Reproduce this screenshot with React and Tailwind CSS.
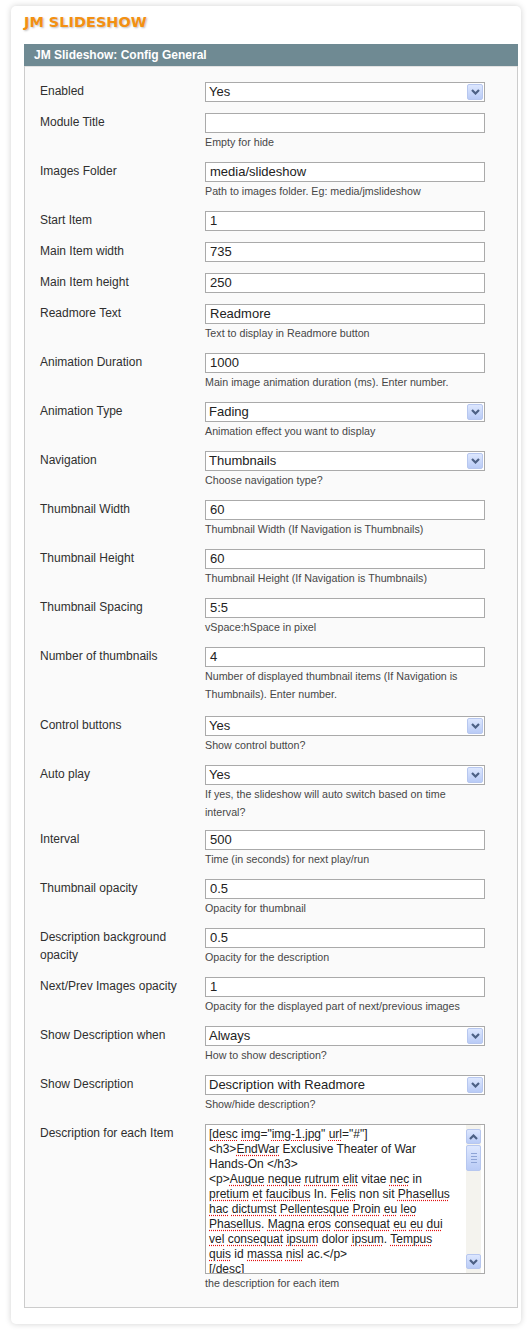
import React from 'react';

const rows = [
  { label: 'Enabled', type: 'select', value: 'Yes' },
  { label: 'Module Title', value: '', note: 'Empty for hide' },
  { label: 'Images Folder', value: 'media/slideshow', note: 'Path to images folder. Eg: media/jmslideshow' },
  { label: 'Start Item', value: '1' },
  { label: 'Main Item width', value: '735' },
  { label: 'Main Item height', value: '250' },
  { label: 'Readmore Text', value: 'Readmore', note: 'Text to display in Readmore button' },
  { label: 'Animation Duration', value: '1000', note: 'Main image animation duration (ms). Enter number.' },
  { label: 'Animation Type', type: 'select', value: 'Fading', note: 'Animation effect you want to display' },
  { label: 'Navigation', type: 'select', value: 'Thumbnails', note: 'Choose navigation type?' },
  { label: 'Thumbnail Width', value: '60', note: 'Thumbnail Width (If Navigation is Thumbnails)' },
  { label: 'Thumbnail Height', value: '60', note: 'Thumbnail Height (If Navigation is Thumbnails)' },
  { label: 'Thumbnail Spacing', value: '5:5', note: 'vSpace:hSpace in pixel' },
  { label: 'Number of thumbnails', value: '4', note: 'Number of displayed thumbnail items (If Navigation is Thumbnails). Enter number.', pb: 'pb-[13px]' },
  { label: 'Control buttons', type: 'select', value: 'Yes', note: 'Show control button?' },
  { label: 'Auto play', type: 'select', value: 'Yes', note: 'If yes, the slideshow will auto switch based on time interval?', pb: 'pb-[9px]' },
  { label: 'Interval', value: '500', note: 'Time (in seconds) for next play/run' },
  { label: 'Thumbnail opacity', value: '0.5', note: 'Opacity for thumbnail' },
  { label: 'Description background opacity', value: '0.5', note: 'Opacity for the description' },
  { label: 'Next/Prev Images opacity', value: '1', note: 'Opacity for the displayed part of next/previous images' },
  { label: 'Show Description when', type: 'select', value: 'Always', note: 'How to show description?' },
  { label: 'Show Description', type: 'select', value: 'Description with Readmore', note: 'Show/hide description?' },
  { label: 'Description for each Item', type: 'textarea', note: 'the description for each item' },
];

// words between ~ get the red spellcheck underline
const descLines = [
  '[~desc~ ~img~="~img-1.jpg~" ~url~="#"]',
  '<h3>~EndWar~ Exclusive Theater of War',
  'Hands-On </h3>',
  '<p>~Augue~ ~neque~ ~rutrum~ ~elit~ vitae ~nec~ in',
  '~pretium~ ~et~ ~faucibus~ In. ~Felis~ non sit ~Phasellus~',
  '~hac~ ~dictumst~ ~Pellentesque~ ~Proin~ ~eu~ ~leo~',
  '~Phasellus~. ~Magna~ ~eros~ ~consequat~ ~eu~ ~eu~ ~dui~',
  '~vel~ ~consequat~ ~ipsum~ dolor ~ipsum~. ~Tempus~',
  '~quis~ id ~massa~ ~nisl~ ac.</p>',
  '[/desc]',
];

const Chevron = ({ up }) => (
  <svg width="9" height="6" viewBox="0 0 9 6">
    <path d={up ? 'M1 5 L4.5 1.5 L8 5' : 'M1 1 L4.5 4.5 L8 1'} fill="none" stroke="#4d6185" strokeWidth="2.2" />
  </svg>
);

const BlueButton = ({ className, children }) => (
  <div className={`flex items-center justify-center rounded-[2px] border border-[#b7c7ef] bg-gradient-to-b from-[#dde7fe] to-[#b9cbf6] ${className}`}>
    {children}
  </div>
);

const Select = ({ value }) => (
  <div className="flex h-[20px] w-[280px] items-center border border-[#aaa] bg-white pl-[3px] pr-[1px]">
    <span className="flex-1 text-[13px] text-[#222]">{value}</span>
    <BlueButton className="h-[16px] w-[16px]">
      <Chevron />
    </BlueButton>
  </div>
);

const Input = ({ value }) => (
  <div className="flex h-[20px] w-[280px] items-center border border-[#aaa] bg-white pl-[4px] text-[13px] text-[#222]">
    {value}
  </div>
);

const TextArea = () => (
  <div className="flex h-[150px] w-[280px] border border-[#aaa] bg-white">
    <div className="flex-1 overflow-hidden pl-[3px] pt-[2px] text-[12px] leading-[15px] text-[#222]">
      {descLines.map((line, i) => (
        <div key={i} className="whitespace-pre">
          {line.split('~').map((part, j) =>
            j % 2 === 1 ? (
              <span key={j} className="underline decoration-dotted decoration-[#e01010] underline-offset-[2px]">{part}</span>
            ) : (
              <span key={j}>{part}</span>
            )
          )}
        </div>
      ))}
    </div>
    <div className="mr-[3px] flex w-[15px] flex-col bg-[#f4f3ee] py-[4px]">
      <BlueButton className="h-[15px] w-[15px]">
        <Chevron up />
      </BlueButton>
      <BlueButton className="mt-[1px] h-[26px] w-[15px] flex-col gap-[2px]">
        <div className="h-px w-[6px] bg-[#8ea4d6]" />
        <div className="h-px w-[6px] bg-[#8ea4d6]" />
        <div className="h-px w-[6px] bg-[#8ea4d6]" />
        <div className="h-px w-[6px] bg-[#8ea4d6]" />
      </BlueButton>
      <div className="flex-1" />
      <BlueButton className="h-[15px] w-[15px]">
        <Chevron />
      </BlueButton>
    </div>
  </div>
);

const Row = ({ row }) => (
  <div className={`flex ${row.pb || 'pb-[11px]'}`}>
    <div className="w-[165px] pr-[10px] text-[12px] leading-[18px] text-[#2f2f2f]">{row.label}</div>
    <div className="w-[280px]">
      {row.type === 'select' ? <Select value={row.value} /> : row.type === 'textarea' ? <TextArea /> : <Input value={row.value} />}
      {row.note && <div className="text-[10.7px] leading-[18px] text-[#474747]">{row.note}</div>}
    </div>
  </div>
);

export default function App() {
  return (
    <div className="min-h-screen bg-white pt-[6px] pl-[11px] font-['Liberation_Sans',Arial,sans-serif]">
      <div className="w-[510px] rounded-[5px] bg-white pl-[13px] pr-[3px] pt-[6px] pb-[16px] shadow-[0_0_6px_rgba(0,0,0,0.18)]">
        <h1 className="h-[20px] font-['DejaVu_Sans',Verdana,sans-serif] text-[14.5px] font-bold leading-[20px] text-[#f39012] [text-shadow:1px_1px_2px_rgba(0,0,0,0.25)]">
          JM SLIDESHOW
        </h1>
        <div className="mt-[12px] w-[494px]">
          <div className="h-[22px] bg-[#6f8a93] pl-[10px] text-[12px] font-bold leading-[22px] text-white">
            JM Slideshow: Config General
          </div>
          <div className="border border-t-0 border-[#ccc] bg-[#fafafa] pl-[15px] pt-[16px] pb-[4px] [box-shadow:inset_0_1px_0_#e2e2e2]">
            {rows.map((row) => (
              <Row key={row.label} row={row} />
            ))}
          </div>
        </div>
      </div>
    </div>
  );
}
